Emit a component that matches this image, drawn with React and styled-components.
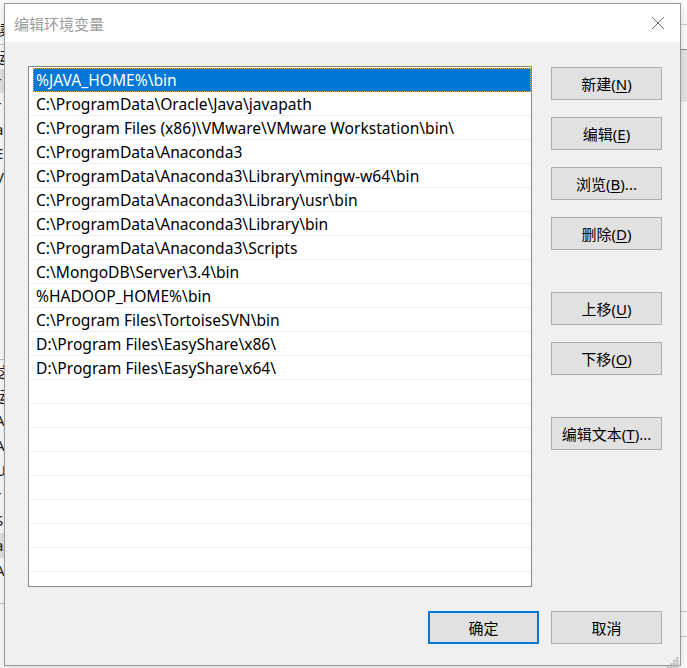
import React from 'react'
import styled, { createGlobalStyle } from 'styled-components'

const GlobalStyle = createGlobalStyle`
  html, body { margin: 0; padding: 0; }
  body {
    font-family: "Noto Sans", "Noto Sans CJK SC", sans-serif;
    background: #ffffff;
  }
`

const Desktop = styled.div`
  position: relative;
  width: 687px;
  height: 668px;
  overflow: hidden;
  background: #ffffff;
`

/* window behind the dialog, only a sliver shows on the left */
const BackLeft = styled.div`
  position: absolute;
  left: 0;
  top: 0;
  width: 20px;
  height: 668px;
  display: flex;
  flex-direction: column;
`
const BackRow = styled.div`
  height: ${({ h }) => h}px;
  margin-left: -5px;
  font-size: 15px;
  line-height: ${({ h }) => h}px;
  color: #1a1a1a;
  white-space: nowrap;
  background: ${({ shade }) => (shade ? '#e6e6e6' : 'transparent')};
  border-bottom: ${({ line }) => (line ? '1px solid #c8c8c8' : 'none')};
`

const BackRight = styled.div`
  position: absolute;
  right: 0;
  top: 0;
  width: 10px;
  height: 668px;
  display: flex;
  flex-direction: column;
`
const BackRightBlock = styled.div`
  height: ${({ h }) => h}px;
  border-bottom: ${({ line }) => (line ? `1px solid ${line}` : 'none')};
  background: ${({ bg }) => bg || 'transparent'};
`

const Dialog = styled.div`
  position: absolute;
  left: 4px;
  top: 3px;
  width: 675px;
  height: 661px;
  border: 1px solid #9a9a9a;
  background: #f0f0f0;
  display: flex;
  flex-direction: column;
  box-shadow: 0 2px 10px rgba(0, 0, 0, 0.18);
`

const TitleBar = styled.div`
  height: 38px;
  background: #ffffff;
  display: flex;
  align-items: center;
  justify-content: space-between;
  padding: 0 14px 0 9px;
  flex-shrink: 0;
`
const Title = styled.div`
  font-size: 15px;
  color: #9b9b9b;
  margin-top: 1px;
`
const CloseBtn = styled.div`
  width: 16px;
  height: 16px;
  display: flex;
  align-items: center;
  justify-content: center;
`

const Body = styled.div`
  flex: 1;
  position: relative;
  display: flex;
  flex-direction: column;
  padding: 24px 18px 0 23px;
`

const Main = styled.div`
  display: flex;
  gap: 19px;
`

const ListBox = styled.div`
  width: 502px;
  height: 518px;
  border: 1px solid #828790;
  background: #ffffff;
  overflow: hidden;
  padding-top: 1px;
`

const Row = styled.div`
  height: 23px;
  border-bottom: 1px solid #f0f0f0;
  margin-left: 1px;
  display: flex;
  align-items: center;
  font-size: 15.6px;
  color: #000000;
  white-space: nowrap;
  padding-left: 6px;
  ${({ selected }) =>
    selected &&
    `
    background: #0078d7;
    color: #ffffff;
    margin-left: 4px;
    padding-left: 3px;
    outline: 1px dotted #f2b13d;
    outline-offset: -1px;
    border-bottom-color: #0078d7;
  `}
`

const Side = styled.div`
  display: flex;
  flex-direction: column;
  padding-top: 1px;
`

const Button = styled.div`
  box-sizing: border-box;
  width: 111px;
  height: 33px;
  margin-top: ${({ gap }) => gap || 0}px;
  background: #e1e1e1;
  border: ${({ primary }) => (primary ? '2px solid #0078d7' : '1px solid #adadad')};
  display: flex;
  align-items: center;
  justify-content: center;
  font-size: 15px;
  color: #000000;
  white-space: nowrap;

  u {
    text-decoration: underline;
    text-underline-offset: 2px;
  }
`

const Footer = styled.div`
  display: flex;
  justify-content: flex-end;
  gap: 12px;
  margin-top: 24px;
`

const Grip = styled.div`
  position: absolute;
  right: 1px;
  bottom: 1px;
  width: 12px;
  height: 12px;
`

const paths = [
  { text: '%JAVA_HOME%\\bin', selected: true },
  { text: 'C:\\ProgramData\\Oracle\\Java\\javapath' },
  { text: 'C:\\Program Files (x86)\\VMware\\VMware Workstation\\bin\\' },
  { text: 'C:\\ProgramData\\Anaconda3' },
  { text: 'C:\\ProgramData\\Anaconda3\\Library\\mingw-w64\\bin' },
  { text: 'C:\\ProgramData\\Anaconda3\\Library\\usr\\bin' },
  { text: 'C:\\ProgramData\\Anaconda3\\Library\\bin' },
  { text: 'C:\\ProgramData\\Anaconda3\\Scripts' },
  { text: 'C:\\MongoDB\\Server\\3.4\\bin' },
  { text: '%HADOOP_HOME%\\bin' },
  { text: 'C:\\Program Files\\TortoiseSVN\\bin' },
  { text: 'D:\\Program Files\\EasyShare\\x86\\' },
  { text: 'D:\\Program Files\\EasyShare\\x64\\' },
]

const emptyRows = Array.from({ length: 10 })

const backRows = [
  { h: 14, t: '' },
  { h: 30, t: '读', line: true },
  { h: 24, t: '运' },
  { h: 24, t: 'r', shade: true },
  { h: 24, t: 'r' },
  { h: 24, t: 'a' },
  { h: 24, t: 'E' },
  { h: 24, t: 'V' },
  { h: 146, t: '' },
  { h: 24, t: '', line: true },
  { h: 24, t: '这' },
  { h: 24, t: '运' },
  { h: 25, t: 'A' },
  { h: 25, t: 'A' },
  { h: 25, t: 'U' },
  { h: 25, t: 'r' },
  { h: 25, t: 'S' },
  { h: 25, t: 'a', shade: true },
  { h: 25, t: 'A' },
  { h: 20, t: '', line: true },
]

function CloseIcon() {
  return (
    <svg width="14" height="14" viewBox="0 0 14 14">
      <path d="M1 1 L13 13 M13 1 L1 13" stroke="#6b6b6b" strokeWidth="1" fill="none" />
    </svg>
  )
}

function GripIcon() {
  const dots = [
    [9, 0], [9, 3], [6, 3], [9, 6], [6, 6], [3, 6], [9, 9], [6, 9], [3, 9], [0, 9],
  ]
  return (
    <svg width="12" height="12" viewBox="0 0 12 12">
      {dots.map(([x, y], i) => (
        <rect key={i} x={x} y={y} width="2.5" height="2.5" fill="#c2c2c2" />
      ))}
    </svg>
  )
}

export default function App() {
  return (
    <Desktop>
      <GlobalStyle />
      <BackLeft>
        {backRows.map((r, i) => (
          <BackRow key={i} h={r.h} shade={r.shade} line={r.line}>
            {r.t}
          </BackRow>
        ))}
      </BackLeft>
      <BackRight>
        <BackRightBlock h={24} line="#d0d0d0" />
        <BackRightBlock h={24} line="#8a8a8a" />
        <BackRightBlock h={52} bg="#e8e8e8" />
        <BackRightBlock h={475} />
        <BackRightBlock h={34} line="#c8c8c8" />
        <BackRightBlock h={24} line="#c8c8c8" />
      </BackRight>

      <Dialog>
        <TitleBar>
          <Title>编辑环境变量</Title>
          <CloseBtn>
            <CloseIcon />
          </CloseBtn>
        </TitleBar>
        <Body>
          <Main>
            <ListBox>
              {paths.map((p, i) => (
                <Row key={i} selected={p.selected}>
                  {p.text}
                </Row>
              ))}
              {emptyRows.map((_, i) => (
                <Row key={'e' + i} />
              ))}
            </ListBox>
            <Side>
              <Button>新建(<u>N</u>)</Button>
              <Button gap={17}>编辑(<u>E</u>)</Button>
              <Button gap={17}>浏览(<u>B</u>)...</Button>
              <Button gap={17}>删除(<u>D</u>)</Button>
              <Button gap={42}>上移(<u>U</u>)</Button>
              <Button gap={17}>下移(<u>O</u>)</Button>
              <Button gap={42}>编辑文本(<u>T</u>)...</Button>
            </Side>
          </Main>
          <Footer>
            <Button primary>确定</Button>
            <Button>取消</Button>
          </Footer>
          <Grip>
            <GripIcon />
          </Grip>
        </Body>
      </Dialog>
    </Desktop>
  )
}
